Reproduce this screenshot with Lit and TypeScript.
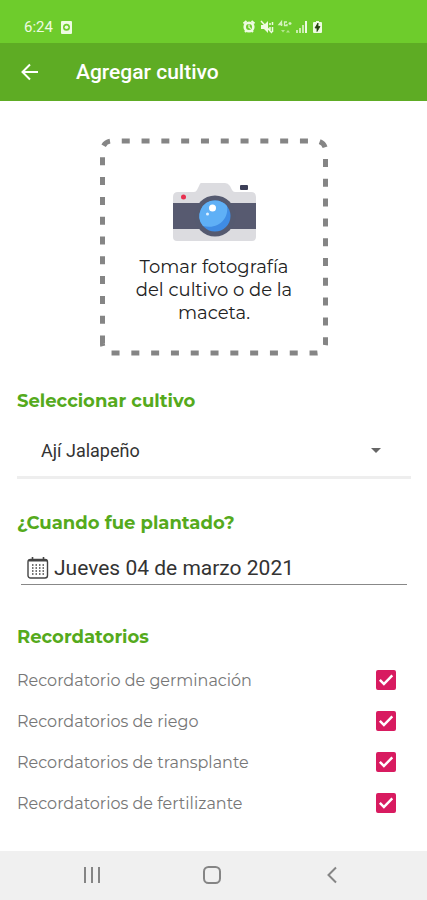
import { LitElement, html, css, svg } from "lit";
import { customElement, state } from "lit/decorators.js";

interface Reminder {
  id: string;
  label: string;
  on: boolean;
}

const camera = svg`
  <path d="M28 1h24q3 0 5 3l2 4q1 2 3 2h16q5 0 5 5v6H0v-6q0-5 5-5h16q2 0 3-2l2-4q1-3 2-3z" fill="#dcdce0"/>
  <rect x="67" y="3" width="8" height="5" rx="1" fill="#3c3f57"/>
  <path d="M0 47h83v8q0 4-4 4H4q-4 0-4-4z" fill="#dcdce0"/>
  <rect y="21" width="83" height="26" fill="#575a70"/>
  <circle cx="10.500" cy="15" r="2.500" fill="#e8304f"/>
  <circle cx="42" cy="34" r="20.500" fill="#555a70"/>
  <circle cx="42" cy="34" r="15.500" fill="#3f8ce4"/>
  <path d="M42 18.500a15.500 15.500 0 0 0-12 25.500c16 4 26-8 24-20a15.500 15.500 0 0 0-12-5.500z" fill="#5fb0f6"/>
  <circle cx="39.500" cy="26" r="3.500" fill="#fff"/>
  <circle cx="34.500" cy="32" r="1.500" fill="#e3f2ff"/>`;

@customElement("app-root")
export class AppRoot extends LitElement {
  static styles = css`
    :host {
      display: flex;
      flex-direction: column;
      min-height: 100vh;
      background: #fff;
      font-family: Montserrat, Inter, sans-serif;
      color: #222;
    }
    * {
      box-sizing: border-box;
    }
    svg {
      display: block;
      flex: none;
    }
    button {
      border: 0;
      padding: 0;
      background: none;
      color: inherit;
      font: inherit;
      cursor: pointer;
    }
    .status {
      display: flex;
      align-items: flex-end;
      height: 43px;
      padding: 0 105px 8px 24px;
      background: #6ecc2c;
      color: #eefbe2;
      font: 15px/16px Roboto, sans-serif;
    }
    .clock {
      display: flex;
      flex: 1;
      align-items: center;
      gap: 8px;
    }
    .bar {
      display: flex;
      align-items: center;
      gap: 36px;
      height: 58px;
      padding: 0 20px;
      background: #5eac24;
      color: #fff;
    }
    .title {
      margin: 0;
      font: 500 21px/24px Roboto, sans-serif;
    }
    main {
      display: flex;
      flex: 1;
      flex-direction: column;
      padding: 36px 16px 24px 17px;
    }
    .photo {
      display: grid;
      align-self: center;
      width: 230px;
      height: 220px;
    }
    .photo > * {
      grid-area: 1 / 1;
    }
    .prompt {
      display: flex;
      flex-direction: column;
      align-items: center;
      gap: 14px;
      padding: 45px 24px 0;
      font-size: 18px;
      line-height: 23px;
    }
    .heading {
      display: block;
      margin: 0;
      color: #55aa1c;
      font-size: 18px;
      font-weight: 700;
      line-height: 24px;
    }
    .field {
      margin-top: 32px;
    }
    .picker {
      display: grid;
      align-items: center;
      height: 66px;
      padding-top: 12px;
      border-bottom: 3px solid #eee;
    }
    .picker > * {
      grid-area: 1 / 1;
    }
    .picker svg {
      justify-self: end;
      margin-right: 30px;
      pointer-events: none;
    }
    select {
      appearance: none;
      width: 100%;
      height: 48px;
      border: 0;
      padding: 0 56px 0 24px;
      background: none;
      color: #333;
      font: 18px/24px Roboto, sans-serif;
    }
    .date {
      display: flex;
      align-items: center;
      gap: 5px;
      height: 32px;
      margin: 18px 4px 0;
      padding: 0 0 2px 6px;
      border-bottom: 1px solid #888;
    }
    .date input {
      flex: 1;
      min-width: 0;
      border: 0;
      padding: 0;
      background: none;
      color: #333;
      font: 21px/26px Roboto, sans-serif;
    }
    .reminders {
      margin: 40px 0 0;
      padding: 0;
      border: 0;
    }
    legend {
      padding: 0;
    }
    .list {
      display: grid;
      gap: 17px;
      margin-top: 19px;
    }
    .row {
      display: flex;
      align-items: center;
      justify-content: space-between;
      height: 24px;
      padding-right: 15px;
      color: #777;
      font-size: 16px;
    }
    .row input {
      appearance: none;
      display: grid;
      width: 20px;
      height: 20px;
      margin: 0;
      border: 2px solid #d81b60;
      border-radius: 2px;
    }
    .row input:checked {
      background: #d81b60;
    }
    .row input:checked::before {
      content: "";
      background: #fff;
      clip-path: polygon(6% 54%, 17% 43%, 37% 64%, 84% 15%, 95% 26%, 37% 86%);
    }
    .nav {
      display: grid;
      grid-template-columns: repeat(3, 120px);
      justify-content: center;
      height: 49px;
      padding: 0 3px 2px 0;
      background: #f0f0f0;
      color: #858585;
    }
    .nav button {
      display: grid;
      place-items: center;
    }
  `;

  @state() private reminders: Reminder[] = [
    { id: "germinacion", label: "Recordatorio de germinación", on: true },
    { id: "riego", label: "Recordatorios de riego", on: true },
    { id: "transplante", label: "Recordatorios de transplante", on: true },
    { id: "fertilizante", label: "Recordatorios de fertilizante", on: true },
  ];

  private toggle(id: string) {
    this.reminders = this.reminders.map((r) => (r.id === id ? { ...r, on: !r.on } : r));
  }

  render() {
    return html`
      <div class="status">
        <div class="clock">
          <span>6:24</span>
          <svg width="11" height="13" viewBox="0 0 11 13">
            <path fill-rule="evenodd" fill="currentColor" d="M1 0h9q1 0 1 1v11q0 1-1 1H1q-1 0-1-1V1q0-1 1-1zM5.500 2.800a3.500 3.500 0 1 0 0 7 3.500 3.500 0 0 0 0-7z"/>
            <circle cx="5.500" cy="6.300" r="1.800" fill="currentColor"/>
          </svg>
        </div>
        <svg width="80" height="16" viewBox="0 0 80 16" fill="currentColor">
          <circle cx="7" cy="8" r="4.300" fill="none" stroke="currentColor" stroke-width="2.600"/>
          <path d="M7 5.500v3l2 1" fill="none" stroke="currentColor" stroke-width="1.200"/>
          <path d="M1.500 4.500l3-2.500M12.500 4.500l-3-2.500M3 13l1.500-1.500M11 13l-1.500-1.500" stroke="currentColor" stroke-width="2"/>
          <path d="M19 6h3l4-4v12l-4-4h-3z"/>
          <path d="M19 2l11 12M28 4v2M28 8v3M30.500 3v3M30.500 8v5" stroke="currentColor" stroke-width="1.500"/>
          <path d="M39.500 7V2.500L37 5.500h3.500M45 3h-2.500v3.500H45V5M46.500 4.500h3M48 3v3" fill="none" stroke="currentColor" stroke-width="1.300" opacity=".8"/>
          <path d="M39 11h4l-2 2.500zM44 13.500h4L46 11z" opacity=".55"/>
          <path d="M54 11h2v3h-2zM57 9h2v5h-2zM60 6h2v8h-2z" opacity=".7"/>
          <path d="M63 2h2v12h-2z"/>
          <path d="M72 3h2V2h3v1h2q1 0 1 1v9q0 1-1 1h-7q-1 0-1-1V4q0-1 1-1z"/>
          <path d="M76 4l-3 5h2v3.500l3-5h-2z" fill="#24420f" stroke="#24420f" stroke-width=".8"/>
        </svg>
      </div>
      <header class="bar">
        <button aria-label="Volver">
          <svg width="20" height="20" viewBox="0 0 20 20" fill="none" stroke="currentColor" stroke-width="2">
            <path d="M18 10H3M10 2.500L2.500 10l7.500 7.500"/>
          </svg>
        </button>
        <h1 class="title">Agregar cultivo</h1>
      </header>
      <main>
        <button class="photo">
          <svg width="230" height="220" viewBox="0 0 230 220" fill="none" stroke="#858585" stroke-width="5" stroke-dasharray="8 11.800">
            <path d="M3.500 206.500V13a9 9 0 0 1 9-9h205a9 9 0 0 1 9 9v194a9 9 0 0 1-9 9h-205a9 9 0 0 1-9-9.500"/>
          </svg>
          <span class="prompt">
            <svg width="83" height="60" viewBox="0 0 83 60">${camera}</svg>
            <span>Tomar fotografía<br />del cultivo o de la<br />maceta.</span>
          </span>
        </button>

        <div class="field">
          <label class="heading" for="crop">Seleccionar cultivo</label>
          <div class="picker">
            <select id="crop">
              <option>Ají Jalapeño</option>
            </select>
            <svg width="10" height="5" viewBox="0 0 10 5"><path d="M0 0h10L5 5z" fill="#666"/></svg>
          </div>
        </div>

        <div class="field">
          <label class="heading" for="planted">¿Cuando fue plantado?</label>
          <div class="date">
            <svg width="22" height="22" viewBox="0 0 22 22" fill="none" stroke="#444">
              <rect x="1" y="2.500" width="19.500" height="18.500" rx="2.500" stroke-width="1.400"/>
              <path d="M2 3.500h18" stroke-width="2"/>
              <path d="M5.500 0v4M16.500 0v4" stroke-width="1.600"/>
              <path d="M5 8h13M5 11h13M5 14h13M5 17h13" stroke-width="1.500" stroke-dasharray="1.500 2"/>
            </svg>
            <input id="planted" type="text" readonly .value=${"Jueves 04 de marzo 2021"} />
          </div>
        </div>

        <fieldset class="reminders">
          <legend class="heading">Recordatorios</legend>
          <div class="list">
            ${this.reminders.map(
              (r) => html`
                <label class="row">
                  <span>${r.label}</span>
                  <input type="checkbox" .checked=${r.on} @change=${() => this.toggle(r.id)} />
                </label>
              `
            )}
          </div>
        </fieldset>
      </main>
      <nav class="nav">
        <button aria-label="Recientes">
          <svg width="18" height="18" viewBox="0 0 18 18" stroke="currentColor" stroke-width="2"><path d="M2 1v16M9 1v16M16 1v16"/></svg>
        </button>
        <button aria-label="Inicio">
          <svg width="18" height="18" viewBox="0 0 18 18" fill="none" stroke="currentColor" stroke-width="2"><rect x="1" y="1" width="16" height="16" rx="4.500"/></svg>
        </button>
        <button aria-label="Atrás">
          <svg width="18" height="18" viewBox="0 0 18 18" fill="none" stroke="currentColor" stroke-width="2"><path d="M13 1.500L5.500 9l7.500 7.500"/></svg>
        </button>
      </nav>
    `;
  }
}
